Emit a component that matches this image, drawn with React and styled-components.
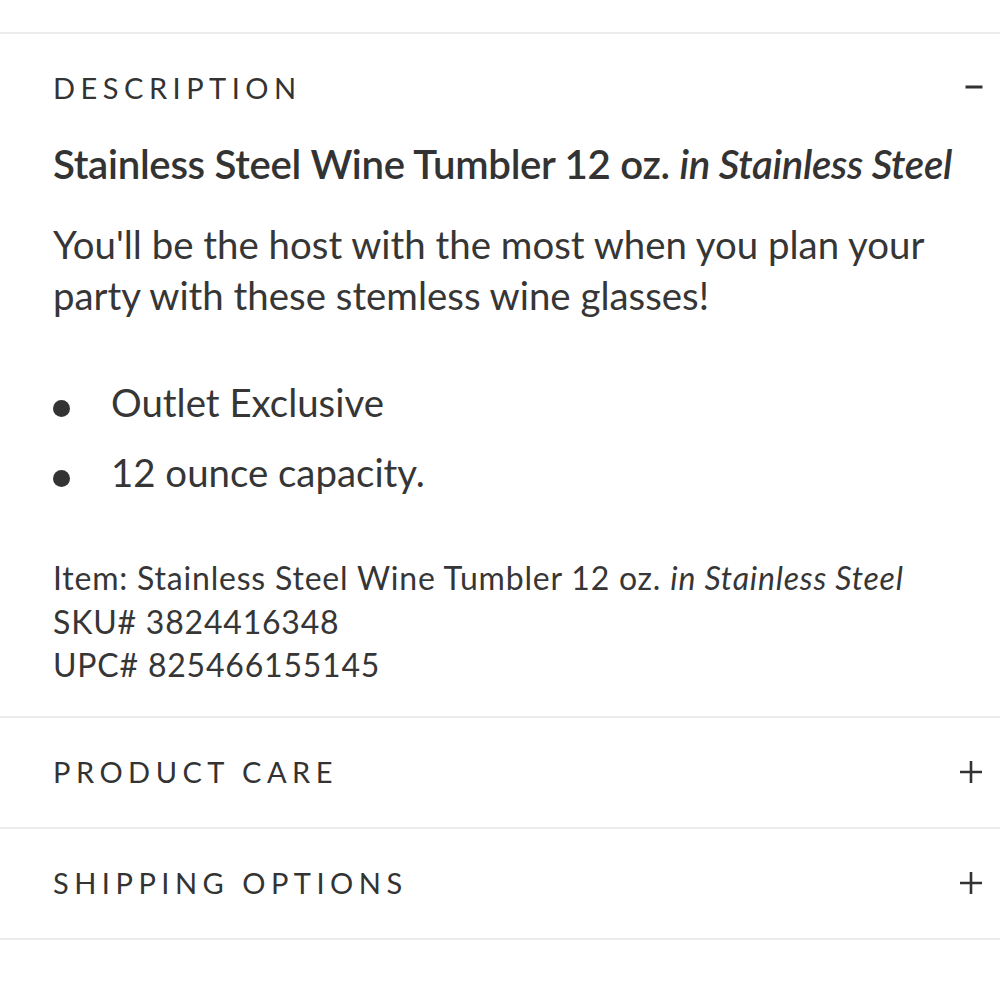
import styled, { createGlobalStyle } from "styled-components";
import { useState } from "react";

const GlobalStyle = createGlobalStyle`
  * {
    box-sizing: border-box;
  }

  body {
    margin: 0;
    background: #fff;
    font-family: "Lato", "Open Sans", sans-serif;
    color: #333;
  }
`;

const sections = [
  { id: "description", title: "DESCRIPTION" },
  { id: "care", title: "PRODUCT CARE" },
  { id: "shipping", title: "SHIPPING OPTIONS" },
];

export default function App() {
  const [open, setOpen] = useState("description");

  return (
    <>
      <GlobalStyle />
      <Page>
        {sections.map(s => (
          <Section key={s.id}>
            <Header onClick={() => setOpen(open === s.id ? "" : s.id)}>
              <HeaderTitle>{s.title}</HeaderTitle>
              <Toggle open={open === s.id} />
            </Header>
            {open === s.id && s.id === "description" && <Description />}
          </Section>
        ))}
      </Page>
    </>
  );
}

function Toggle({ open }) {
  if (open) {
    return (
      <Minus width="18" height="4" viewBox="0 0 18 4">
        <rect x="0.5" y="0.5" width="17" height="3" fill="#333" />
      </Minus>
    );
  }
  return (
    <Plus width="24" height="24" viewBox="0 0 24 24">
      <path d="M12 1v22M1 12h22" stroke="#333" strokeWidth="2.6" fill="none" />
    </Plus>
  );
}

function Description() {
  return (
    <Body>
      <ProductName>
        Stainless Steel Wine Tumbler 12 oz. <em>in Stainless Steel</em>
      </ProductName>
      <Paragraph>
        You'll be the host with the most when you plan your party with these stemless wine glasses!
      </Paragraph>
      <Bullets>
        <li>Outlet Exclusive</li>
        <li>12 ounce capacity.</li>
      </Bullets>
      <Details>
        <div>Item: Stainless Steel Wine Tumbler 12 oz. <em>in Stainless Steel</em></div>
        <div>SKU# 3824416348</div>
        <div>UPC# 825466155145</div>
      </Details>
    </Body>
  );
}

const Page = styled.div`
  padding-top: 32px;
  border-bottom: 2px solid #ececec;
`;

const Section = styled.section`
  border-top: 2px solid #ececec;
`;

const Header = styled.div`
  height: 109px;
  display: flex;
  align-items: center;
  justify-content: space-between;
  padding: 0 17px 2px 53px;
  cursor: pointer;
`;

const HeaderTitle = styled.h2`
  margin: 0;
  font-size: 29px;
  font-weight: 400;
  letter-spacing: 5.5px;
  color: #333;
`;

const Minus = styled.svg`
  display: block;
  margin-bottom: 1px;
`;

const Plus = styled.svg`
  display: block;
  margin: 2px 0 0;
`;

const Body = styled.div`
  padding: 0 40px 29px 53px;
`;

const ProductName = styled.h3`
  margin: 0 0 34px;
  font-size: 40.2px;
  font-weight: 600;
  line-height: 42px;
  letter-spacing: -0.3px;
  color: #333;

  em {
    font-weight: inherit;
  }
`;

const Paragraph = styled.p`
  margin: 0;
  font-size: 38.4px;
  line-height: 51px;
  color: #363636;
`;

const Bullets = styled.ul`
  list-style: none;
  margin: 46px 0 49px;
  padding: 0;
  font-size: 38.4px;
  line-height: 70px;
  color: #363636;

  li {
    display: flex;
    align-items: center;
    gap: 41px;
  }

  li::before {
    content: "";
    width: 17px;
    height: 17px;
    margin-top: 12px;
    border-radius: 50%;
    background: #333;
    flex: none;
  }
`;

const Details = styled.div`
  font-size: 32px;
  line-height: 43.5px;
  letter-spacing: 0.8px;
  color: #363636;
`;
